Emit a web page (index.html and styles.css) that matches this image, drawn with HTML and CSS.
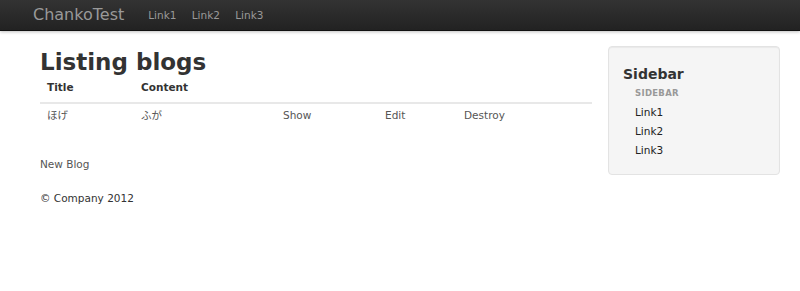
FILE: index.html
```html
<!DOCTYPE html>
<html>
<head>
<meta charset="utf-8">
<link rel="stylesheet" href="styles.css">
</head>
<body>
<div class="navbar">
  <a class="brand" href="#">ChankoTest</a>
  <ul class="nav">
    <li><a href="#">Link1</a></li>
    <li><a href="#">Link2</a></li>
    <li><a href="#">Link3</a></li>
  </ul>
</div>
<div class="page">
  <div class="main">
    <h1 class="title">Listing blogs</h1>
    <table class="blogs">
      <thead>
        <tr><th class="c1">Title</th><th class="c2">Content</th><th class="c3"></th><th class="c4"></th><th class="c5"></th></tr>
      </thead>
      <tbody>
        <tr><td>ほげ</td><td>ふが</td><td><a href="#">Show</a></td><td><a href="#">Edit</a></td><td><a href="#">Destroy</a></td></tr>
      </tbody>
    </table>
    <p class="new"><a href="#">New Blog</a></p>
    <p class="footer">© Company 2012</p>
  </div>
  <div class="sidebar">
    <h3 class="side-title">Sidebar</h3>
    <ul class="side-nav">
      <li class="side-header">SIDEBAR</li>
      <li><a href="#">Link1</a></li>
      <li><a href="#">Link2</a></li>
      <li><a href="#">Link3</a></li>
    </ul>
  </div>
</div>
</body>
</html>
```
FILE: styles.css
```css
* { box-sizing: border-box; }
body {
  margin: 0;
  font-family: "DejaVu Sans", Verdana, "Noto Sans CJK JP", sans-serif;
  font-size: 10.5px;
  color: #333;
  background: #fff;
}
a { text-decoration: none; }
.navbar {
  height: 31px;
  background: linear-gradient(#333333, #222222);
  border-bottom: 1px solid #111;
  box-shadow: 0 1px 3px rgba(0,0,0,0.25);
  display: flex;
  align-items: center;
  padding-left: 33px;
}
.brand {
  color: #999;
  font-size: 16px;
  margin-right: 16px;
  line-height: 30px;
}
.nav {
  list-style: none;
  margin: 0;
  padding: 0;
  display: flex;
}
.nav a {
  display: block;
  color: #999;
  font-size: 10.5px;
  padding: 0 8px;
  width: 43.5px;
  line-height: 30px;
}
.page {
  display: flex;
  padding: 16px 20px 0 40px;
  gap: 16px;
}
.main { width: 552px; }
.title {
  margin: 0;
  font-size: 23px;
  line-height: 30px;
  font-weight: bold;
  color: #333;
}
.blogs {
  width: 552px;
  border-collapse: collapse;
  table-layout: fixed;
}
.blogs th, .blogs td {
  text-align: left;
  line-height: 13px;
  font-size: 10.5px;
  padding: 5px 7px 7px;
}
.blogs th { font-weight: bold; color: #333; padding: 4px 7px 8px; }
.blogs thead tr { border-bottom: 2px solid #e8e8e8; }
.blogs td { color: #555; }
.blogs td a { color: #555; }
.c1 { width: 94px; }
.c2 { width: 142px; }
.c3 { width: 102px; }
.c4 { width: 79px; }
.c5 { width: 135px; }
.new { margin: 28px 0 0; line-height: 14px; }
.new a { color: #555; }
.footer { margin: 20px 0 0; line-height: 14px; color: #333; }
.sidebar {
  width: 172px;
  height: 129px;
  margin-top: -1px;
  background: #f5f5f5;
  border: 1px solid #e3e3e3;
  border-radius: 4px;
  box-shadow: inset 0 1px 1px rgba(0,0,0,0.05);
  padding: 17px 14px;
}
.side-title {
  margin: 0;
  font-size: 14px;
  line-height: 20px;
  font-weight: bold;
  color: #333;
}
.side-nav {
  list-style: none;
  margin: 0;
  padding: 0 0 0 12px;
}
.side-nav li { line-height: 19px; }
.side-header {
  font-size: 8.5px;
  font-weight: bold;
  color: #999;
  letter-spacing: 0.3px;
}
.side-nav a { color: #222; font-size: 10.5px; }
```
